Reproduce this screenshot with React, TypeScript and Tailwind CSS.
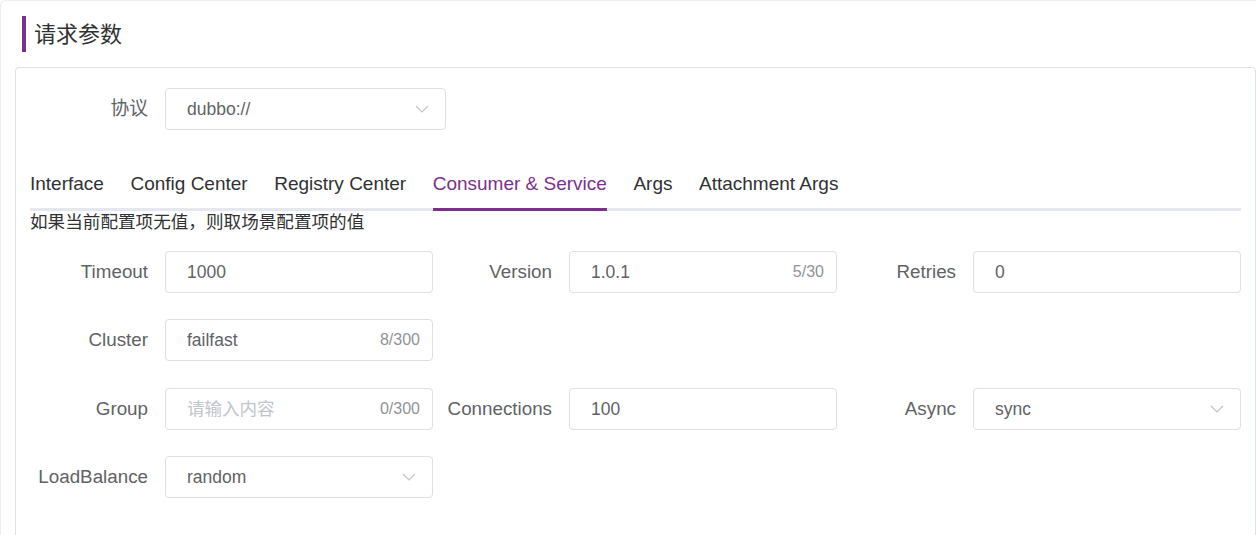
import React from "react";

const FONT = { fontFamily: '"Liberation Sans", "Noto Sans CJK SC", sans-serif' };

function Chevron() {
  return (
    <svg width="14" height="8" viewBox="0 0 14 8" className="shrink-0">
      <polyline points="1,1 7,7 13,1" fill="none" stroke="#c0c4cc" strokeWidth="1.2" />
    </svg>
  );
}

function Field({
  label,
  value,
  placeholder,
  count,
  select,
  width = "w-[268px]",
}: {
  label: string;
  value?: string;
  placeholder?: string;
  count?: string;
  select?: boolean;
  width?: string;
}) {
  return (
    <div className="flex items-center shrink-0 w-[404px]">
      <div className="w-[136px] shrink-0 pr-[17px] text-right text-[18.8px] text-[#606266] whitespace-nowrap">
        {label}
      </div>
      <div
        className={`${width} shrink-0 h-[42px] rounded-[4px] border border-[#dcdfe6] bg-white flex items-center pl-[21px] ${
          select ? "pr-[16px]" : "pr-[12px]"
        }`}
      >
        <span className={`flex-1 text-[17.5px] ${value ? "text-[#606266]" : "text-[#c0c4cc]"}`}>
          {value || placeholder}
        </span>
        {count && <span className="text-[16px] text-[#909399]">{count}</span>}
        {select && <Chevron />}
      </div>
    </div>
  );
}

const TABS = ["Interface", "Config Center", "Registry Center", "Consumer & Service", "Args", "Attachment Args"];

export default function App() {
  return (
    <div className="w-[1256px] h-[535px] overflow-hidden bg-white" style={FONT}>
      <div className="w-[1270px] min-h-[560px] border-t border-l border-[#ebeef5] rounded-tl-[6px] bg-white">
        {/* title */}
        <div className="flex items-center h-[36px] mt-[15px] ml-[21px]">
          <div className="w-[4px] h-[36px] bg-[#7c2f8e]" />
          <div className="ml-[8px] text-[22px] text-[#303133]">请求参数</div>
        </div>

        {/* card */}
        <div className="mt-[15px] ml-[14px] w-[1241px] min-h-[500px] border border-[#dcdfe6] rounded-[4px] pt-[20px] pl-[13px]">
          <div className="flex items-center">
            <Field label="协议" value="dubbo://" select width="w-[281px]" />
          </div>

          {/* tabs */}
          <div className="mt-[33px] ml-[1px] w-[1211px] flex border-b-[3px] border-[#e4e7ed]">
            {TABS.map((t, i) => (
              <div
                key={t}
                className={`h-[48px] -mb-[3px] leading-[41px] text-[19px] whitespace-nowrap border-b-[3px] ${
                  i === 0 ? "" : "ml-[26.5px]"
                } ${t === "Consumer & Service" ? "text-[#7c2f8e] border-[#7c2f8e]" : "text-[#303133] border-transparent"}`}
              >
                {t}
              </div>
            ))}
          </div>

          <div className="ml-[1px] leading-[22px] text-[17.6px] text-[#303133]">如果当前配置项无值，则取场景配置项的值</div>

          <div className="mt-[18px] flex flex-col">
            <div className="flex">
              <Field label="Timeout" value="1000" />
              <Field label="Version" value="1.0.1" count="5/30" />
              <Field label="Retries" value="0" />
            </div>
            <div className="flex mt-[26px]">
              <Field label="Cluster" value="failfast" count="8/300" />
            </div>
            <div className="flex mt-[27px]">
              <Field label="Group" placeholder="请输入内容" count="0/300" />
              <Field label="Connections" value="100" />
              <Field label="Async" value="sync" select />
            </div>
            <div className="flex mt-[26px]">
              <Field label="LoadBalance" value="random" select />
            </div>
          </div>
        </div>
      </div>
    </div>
  );
}
